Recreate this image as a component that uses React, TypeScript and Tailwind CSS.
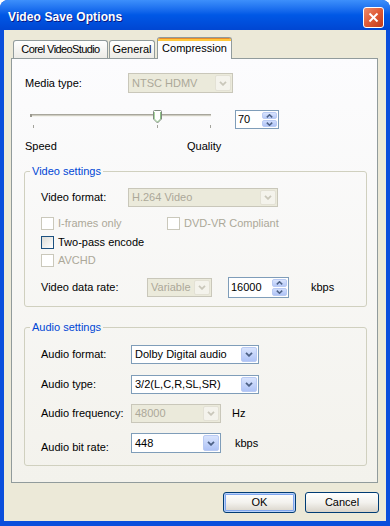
import React from "react";

const Chevron = ({ color }: { color: string }) => (
  <svg width="8" height="5" viewBox="0 0 8 5">
    <polyline points="1,0.8 4,3.8 7,0.8" fill="none" stroke={color} strokeWidth="1.8" />
  </svg>
);

function Combo({ text, w, h, disabled }: { text: string; w: string; h: string; disabled?: boolean }) {
  return (
    <div
      className={`${w} ${h} flex items-stretch border ${
        disabled ? "border-[#C9C7BA] bg-[#EBEADB]" : "border-[#7F9DB9] bg-white"
      }`}
    >
      <div className={`flex-1 flex items-center pl-[3px] whitespace-nowrap ${disabled ? "text-[#ACA899]" : "text-black"}`}>
        {text}
      </div>
      <div
        className={`w-[16px] m-[1px] rounded-[2px] flex items-center justify-center border ${
          disabled
            ? "border-[#E3E1D5] bg-[#F4F3EC]"
            : "border-[#B9CAF3] bg-gradient-to-b from-[#D9E4FD] to-[#AFC3F6]"
        }`}
      >
        <Chevron color={disabled ? "#C9C7BA" : "#4D6185"} />
      </div>
    </div>
  );
}

function Spin({ text, w, h }: { text: string; w: string; h: string }) {
  return (
    <div className={`${w} ${h} flex border border-[#7F9DB9] bg-white`}>
      <div className="flex-1 flex items-center pl-[2px]">{text}</div>
      <div className="w-[15px] m-[1px] flex flex-col gap-[1px]">
        <div className="flex-1 rounded-[2px] border border-[#B9CAF3] bg-gradient-to-b from-[#D9E4FD] to-[#B6C9F7] flex items-center justify-center">
          <svg width="7" height="4" viewBox="0 0 7 4">
            <polyline points="0.8,3.4 3.5,0.8 6.2,3.4" fill="none" stroke="#4D6185" strokeWidth="1.5" />
          </svg>
        </div>
        <div className="flex-1 rounded-[2px] border border-[#B9CAF3] bg-gradient-to-b from-[#CFDCFC] to-[#AFC3F6] flex items-center justify-center">
          <svg width="7" height="4" viewBox="0 0 7 4">
            <polyline points="0.8,0.6 3.5,3.2 6.2,0.6" fill="none" stroke="#4D6185" strokeWidth="1.5" />
          </svg>
        </div>
      </div>
    </div>
  );
}

function Check({ label, disabled }: { label: string; disabled?: boolean }) {
  return (
    <div className="flex items-center h-[13px]">
      <div
        className={`w-[13px] h-[13px] border ${
          disabled ? "border-[#CAC8BB] bg-white" : "border-[#1C5180] bg-gradient-to-br from-[#DCDCD7] to-white"
        }`}
      />
      <span className={`ml-[4px] whitespace-nowrap ${disabled ? "text-[#ACA899]" : "text-black"}`}>{label}</span>
    </div>
  );
}

function Slider() {
  return (
    <svg width="195" height="22" viewBox="0 0 195 22">
      <rect x="5" y="6" width="181" height="1" fill="#A8A69C" />
      <rect x="5" y="7" width="181" height="1" fill="#CFCDC2" />
      <rect x="5" y="8" width="181" height="1" fill="#F4F3EE" />
      <rect x="5" y="6" width="2" height="3" fill="#9A988E" />
      <rect x="8" y="17" width="1" height="3" fill="#A3A39C" />
      <rect x="132" y="17" width="1" height="3" fill="#A3A39C" />
      <rect x="185" y="17" width="1" height="3" fill="#A3A39C" />
      <path
        d="M129.5 2.5 h6 q1 0 1 1 v7.5 l-4 4 l-4 -4 v-7.5 q0 -1 1 -1 z"
        fill="#FFFFFF"
        stroke="#7E8A7E"
        strokeWidth="1"
      />
      <path d="M129.5 4 v7 l3 3" fill="none" stroke="#A8D8A0" strokeWidth="1" />
      <path d="M135.5 4 v7 l-3 3" fill="none" stroke="#8CC084" strokeWidth="1" />
    </svg>
  );
}

export default function App() {
  return (
    <div className="w-[390px] h-[526px] flex flex-col bg-[#0A4EDC] rounded-t-[8px] overflow-hidden font-['Liberation_Sans',Arial,sans-serif] text-[11px] leading-[13px] text-black">
      {/* Title bar */}
      <div className="h-[30px] flex items-center justify-between pl-[8px] pr-[6px] pt-[4px] bg-gradient-to-b from-[#3D8FFB] via-[#0058E6] to-[#0046D2]">
        <span className="text-white font-bold text-[12px] tracking-[0.1px] [text-shadow:1px_1px_0_#0A1883]">
          Video Save Options
        </span>
        <div className="w-[21px] h-[21px] rounded-[3px] border border-white bg-gradient-to-br from-[#EC8A6A] via-[#DF5A36] to-[#C23A1A] flex items-center justify-center">
          <svg width="11" height="11" viewBox="0 0 11 11">
            <line x1="1.5" y1="1.5" x2="9.5" y2="9.5" stroke="white" strokeWidth="2" />
            <line x1="9.5" y1="1.5" x2="1.5" y2="9.5" stroke="white" strokeWidth="2" />
          </svg>
        </div>
      </div>

      {/* Body */}
      <div className="mx-[4px] h-[491px] flex flex-col bg-[#ECE9D8]">
        {/* Tabs */}
        <div className="mt-[7px] h-[21px] flex items-end pl-[9px] relative z-10">
          <div className="w-[95px] h-[18px] rounded-t-[3px] border border-b-0 border-[#919B9C] bg-gradient-to-b from-white to-[#ECEBE6] flex items-center justify-center whitespace-nowrap tracking-[-0.6px]">
            Corel VideoStudio
          </div>
          <div className="ml-[1px] w-[46px] h-[18px] rounded-t-[3px] border border-b-0 border-[#919B9C] bg-gradient-to-b from-white to-[#ECEBE6] flex items-center justify-center whitespace-nowrap">
            General
          </div>
          <div className="ml-[2px] w-[75px] h-[22px] -mb-px rounded-t-[3px] border border-b-0 border-[#919B9C] bg-[#FCFCFE] flex flex-col overflow-hidden">
            <div className="h-[1px] bg-[#E68B2C]" />
            <div className="h-[2px] bg-[#FFC73C]" />
            <div className="flex-1 flex items-center justify-center whitespace-nowrap pb-[3px]">Compression</div>
          </div>
        </div>

        {/* Panel */}
        <div className="ml-[7px] w-[367px] h-[425px] border border-[#919B9C] bg-gradient-to-b from-[#FCFCFE] to-[#F3F2EC] flex flex-col">
          <div className="mt-[14px] pl-[13px] h-[20px] flex items-center">
            <span className="w-[103px]">Media type:</span>
            <Combo text="NTSC HDMV" w="w-[105px]" h="h-[20px]" disabled />
          </div>

          <div className="mt-[15px] pl-[13px] flex items-start">
            <Slider />
            <div className="ml-[15px] mt-[2px]">
              <Spin text="70" w="w-[44px]" h="h-[19px]" />
            </div>
          </div>

          <div className="mt-[10px] pl-[13px] flex h-[13px]">
            <span className="w-[162px]">Speed</span>
            <span>Quality</span>
          </div>

          <fieldset className="mt-[12px] ml-[12px] w-[343px] border border-[#D0D0BF] rounded-[3px] pb-[8px]">
            <legend className="ml-[5px] px-[2px] text-[#0046D5] leading-[13px]">Video settings</legend>
            <div className="pl-[16px] flex flex-col">
              <div className="mt-[10px] h-[19px] flex items-center">
                <span className="w-[87px]">Video format:</span>
                <Combo text="H.264 Video" w="w-[150px]" h="h-[19px]" disabled />
              </div>
              <div className="mt-[10px] flex">
                <div className="w-[126px]">
                  <Check label="I-frames only" disabled />
                </div>
                <Check label="DVD-VR Compliant" disabled />
              </div>
              <div className="mt-[6px]">
                <Check label="Two-pass encode" />
              </div>
              <div className="mt-[5px]">
                <Check label="AVCHD" disabled />
              </div>
              <div className="mt-[10px] h-[21px] flex items-center">
                <span className="w-[106px]">Video data rate:</span>
                <Combo text="Variable" w="w-[65px]" h="h-[19px]" disabled />
                <div className="ml-[16px]">
                  <Spin text="16000" w="w-[61px]" h="h-[21px]" />
                </div>
                <span className="ml-[22px]">kbps</span>
              </div>
            </div>
          </fieldset>

          <fieldset className="mt-[14px] ml-[12px] w-[343px] border border-[#D0D0BF] rounded-[3px] pb-[12px]">
            <legend className="ml-[5px] px-[2px] text-[#0046D5] leading-[13px]">Audio settings</legend>
            <div className="pl-[16px] flex flex-col">
              <div className="mt-[11px] h-[19px] flex items-center">
                <span className="w-[90px]">Audio format:</span>
                <Combo text="Dolby Digital audio" w="w-[128px]" h="h-[19px]" />
              </div>
              <div className="mt-[11px] h-[19px] flex items-center">
                <span className="w-[90px]">Audio type:</span>
                <Combo text="3/2(L,C,R,SL,SR)" w="w-[128px]" h="h-[19px]" />
              </div>
              <div className="mt-[10px] h-[19px] flex items-center">
                <span className="w-[90px]">Audio frequency:</span>
                <Combo text="48000" w="w-[90px]" h="h-[19px]" disabled />
                <span className="ml-[11px]">Hz</span>
              </div>
              <div className="mt-[10px] h-[20px] flex items-start">
                <span className="w-[90px] mt-[8px]">Audio bit rate:</span>
                <Combo text="448" w="w-[90px]" h="h-[20px]" />
                <span className="ml-[14px] mt-[4px]">kbps</span>
              </div>
            </div>
          </fieldset>
        </div>

        {/* Buttons */}
        <div className="mt-[9px] flex justify-end pr-[7px] gap-[9px]">
          <div className="w-[73px] h-[21px] rounded-[3px] border border-[#003C74] bg-gradient-to-b from-white via-[#F3F2EE] to-[#D8D3C9] flex items-center justify-center shadow-[inset_0_0_0_1px_#B9D1FA,inset_0_0_0_2px_#7FA6EE]">
            OK
          </div>
          <div className="w-[74px] h-[21px] rounded-[3px] border border-[#003C74] bg-gradient-to-b from-white via-[#F3F2EE] to-[#D8D3C9] flex items-center justify-center">
            Cancel
          </div>
        </div>
      </div>
    </div>
  );
}
